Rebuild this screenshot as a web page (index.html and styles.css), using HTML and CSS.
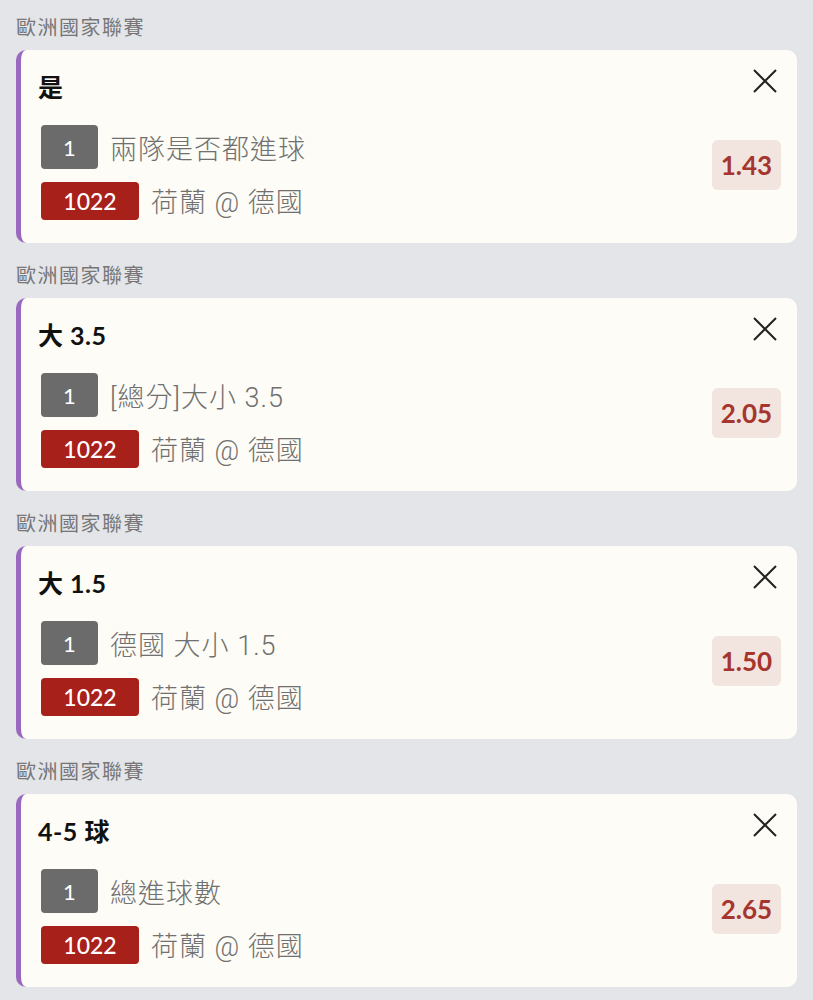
FILE: index.html
```html
<!DOCTYPE html>
<html lang="zh-Hant">
<head>
    <meta charset="UTF-8">
    <meta name="viewport" content="width=device-width, initial-scale=1.0">
    <title>投注單</title>
    <link rel="stylesheet" href="styles.css">
</head>
<body>
    <div class="slip">
        <div class="bet">
            <div class="league">歐洲國家聯賽</div>
            <div class="card">
                <div class="card-main">
                    <div class="pick">是</div>
                    <div class="line">
                        <span class="tag tag-num">1</span>
                        <span class="desc">兩隊是否都進球</span>
                    </div>
                    <div class="line line-match">
                        <span class="tag tag-match">1022</span>
                        <span class="desc">荷蘭 @ 德國</span>
                    </div>
                </div>
                <div class="card-side">
                    <button class="close" aria-label="移除">
                        <svg viewBox="0 0 24 24" width="24" height="24"><path d="M1 1 L23 23 M23 1 L1 23"/></svg>
                    </button>
                    <div class="odds">1.43</div>
                </div>
            </div>
        </div>

        <div class="bet">
            <div class="league">歐洲國家聯賽</div>
            <div class="card">
                <div class="card-main">
                    <div class="pick">大 3.5</div>
                    <div class="line">
                        <span class="tag tag-num">1</span>
                        <span class="desc">[總分]大小 3.5</span>
                    </div>
                    <div class="line line-match">
                        <span class="tag tag-match">1022</span>
                        <span class="desc">荷蘭 @ 德國</span>
                    </div>
                </div>
                <div class="card-side">
                    <button class="close" aria-label="移除">
                        <svg viewBox="0 0 24 24" width="24" height="24"><path d="M1 1 L23 23 M23 1 L1 23"/></svg>
                    </button>
                    <div class="odds">2.05</div>
                </div>
            </div>
        </div>

        <div class="bet">
            <div class="league">歐洲國家聯賽</div>
            <div class="card">
                <div class="card-main">
                    <div class="pick">大 1.5</div>
                    <div class="line">
                        <span class="tag tag-num">1</span>
                        <span class="desc">德國 大小 1.5</span>
                    </div>
                    <div class="line line-match">
                        <span class="tag tag-match">1022</span>
                        <span class="desc">荷蘭 @ 德國</span>
                    </div>
                </div>
                <div class="card-side">
                    <button class="close" aria-label="移除">
                        <svg viewBox="0 0 24 24" width="24" height="24"><path d="M1 1 L23 23 M23 1 L1 23"/></svg>
                    </button>
                    <div class="odds">1.50</div>
                </div>
            </div>
        </div>

        <div class="bet">
            <div class="league">歐洲國家聯賽</div>
            <div class="card">
                <div class="card-main">
                    <div class="pick">4-5 球</div>
                    <div class="line">
                        <span class="tag tag-num">1</span>
                        <span class="desc">總進球數</span>
                    </div>
                    <div class="line line-match">
                        <span class="tag tag-match">1022</span>
                        <span class="desc">荷蘭 @ 德國</span>
                    </div>
                </div>
                <div class="card-side">
                    <button class="close" aria-label="移除">
                        <svg viewBox="0 0 24 24" width="24" height="24"><path d="M1 1 L23 23 M23 1 L1 23"/></svg>
                    </button>
                    <div class="odds">2.65</div>
                </div>
            </div>
        </div>
    </div>
</body>
</html>
```

FILE: styles.css
```css
body {
    margin: 0;
    background: #e4e5e9;
    font-family: Lato, "Noto Sans CJK TC", sans-serif;
}

.slip {
    padding: 0 16px;
}

.bet {
    margin-bottom: 5px;
}

.league {
    padding: 12px 0 8px;
    font-size: 20px;
    line-height: 30px;
    letter-spacing: 1.5px;
    color: #767676;
}

.card {
    display: flex;
    height: 193px;
    box-sizing: border-box;
    background: #fdfcf6;
    border-left: 5px solid #9a68bf;
    border-radius: 10px;
}

.card-main {
    flex: 1;
    padding: 22px 0 0 17px;
}

.pick {
    font-size: 25px;
    line-height: 30px;
    font-weight: 700;
    letter-spacing: 0.5px;
    color: #111;
    margin-bottom: 23px;
}

.line {
    display: flex;
    align-items: center;
    padding-left: 3px;
}

.line-match {
    margin-top: 12px;
}

.tag {
    display: flex;
    align-items: center;
    justify-content: center;
    color: #fff;
    border-radius: 4px;
}

.tag-num {
    width: 57px;
    height: 44px;
    background: #6b6b6b;
    font-size: 22px;
    font-weight: 400;
}

.tag-match {
    width: 98px;
    height: 38px;
    background: #a8201a;
    font-size: 23px;
    font-weight: 500;
}

.desc {
    margin-left: 12px;
    font-family: Roboto, "Noto Sans CJK TC", sans-serif;
    font-size: 27px;
    font-weight: 300;
    letter-spacing: 1px;
    color: #707070;
}

.card-side {
    display: flex;
    flex-direction: column;
    align-items: flex-end;
    padding: 19px 16px 0 0;
}

.close {
    width: 24px;
    height: 24px;
    padding: 0;
    margin-right: 4px;
    border: none;
    background: none;
    cursor: pointer;
}

.close svg {
    display: block;
    fill: none;
    stroke: #222;
    stroke-width: 2;
}

.odds {
    margin-top: 47px;
    width: 69px;
    height: 50px;
    display: flex;
    align-items: center;
    justify-content: center;
    background: #f2e4de;
    border-radius: 6px;
    color: #a5352d;
    font-size: 26px;
    font-weight: 700;
}
```
